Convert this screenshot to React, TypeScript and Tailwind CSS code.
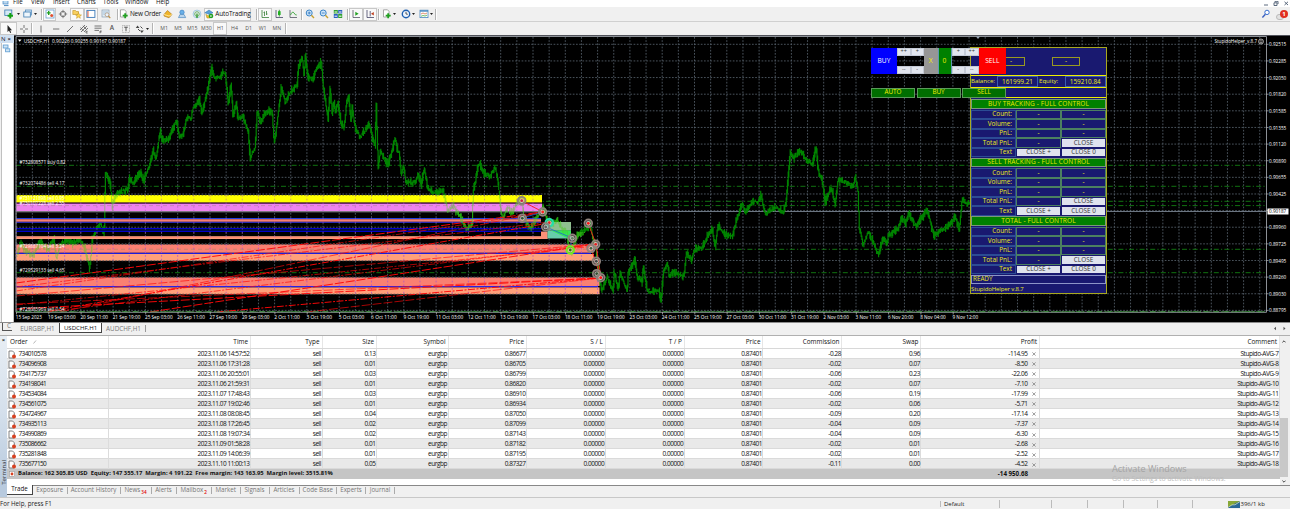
import React from "react";

const GREEN = "#008400";

const PRICE_POINTS = `17,255 20,243 25,250 33,256 40,241 47,250 54,239 56,258 60,244 66,240 73,243 80,240 85,249 89.5,270 92,240 96.5,228 100,224 104,233 105,182 105.5,172 110,182 112,207 115,196 120,192 128,190 129,177 133,184 140,172 143,181 148,170 153,150 156,160 160,130 162,141 168,139 172.7,129 176.7,120 179,137 182.7,135 187,117 191,120 192,110 199,100 202,113 207,92 211.7,67 214,78 220,77 222,72 225,73 228,103 231,85 233,118 236,103 238,118 243,117 248,132 250,158 255,148 257,110 260,122 265,113 272,110 274,145 278,115 281,87 285,102 292,90 297,85 298,68 302,56 304,78 305,54 308,78 312,80 317,67 320,66 321,60 323,85 325,100 328,120 330,87 332,113 334,102 335,113 338,103 341,125 344,127 347,98 348.5,96 351,123 352,107 355,128 360,137 365,130 369,123 372,137 375,145 376,100 378,168 380,152 388,165 392,150 395,138 397,150 399,152 401,175 403,165 406,183 415,182 418,173 421,185 424,168 427,185 428,190 437,193 443,190 448,212 453,205 460,217 467,230 472,223 473,190 475.5,180 477,168 480,163 483,172 490,177 495,167 498,183 500,203 502,220 507,208 513,212 518,200 522,203 524,220 530,228 537,217 543,207 547,220 552,223 557,220 563,230 567,230 568,247 572,252 577,235 583,232 587,228 590,223 593,240 596,247 598,270 601,288 602,290 607,277 613,291 614,273 618,288 620,273 627,291 628,273 635,259 637,277 642,282 643,265 647,290 653,292 659,290 661,303 663,273 667,263 669,275 674,272 678,275 684,277 686,253 692,260 694,250 702,248 707,237 712,228 715,247 718,225 723,233 732,237 737,218 742,204 745,213 752,202 758,202 761,194 765,215 770,210 777,207 783,213 786,202 788,177 790,152 794,158 799,150 807,160 812,165 816,147 818,170 822,180 825,202 831,187 835,205 838,180 845,182 853,187 855,175 858,193 859,227 863,245 868,232 873,242 878,255 883,238 887,245 888,235 897,230 902,218 906,223 908,213 916,227 922,217 927,210 934,237 940,230 948,227 955,217 959,230 962,199 966,204 970,202`
  .split(/\s+/)
  .map((p) => p.split(",").map(Number));

function buildPricePath() {
  let seed = 7;
  const rnd = () => {
    seed = (seed * 16807) % 2147483647;
    return seed / 2147483647;
  };
  const parts: string[] = [];
  let k = 0;
  let prev = PRICE_POINTS[0][1];
  for (let x = 17; x < 970; x += 0.67) {
    while (k < PRICE_POINTS.length - 2 && PRICE_POINTS[k + 1][0] <= x) k++;
    const [x0, y0] = PRICE_POINTS[k];
    const [x1, y1] = PRICE_POINTS[k + 1];
    const y = y0 + ((y1 - y0) * (x - x0)) / (x1 - x0);
    const r = rnd();
    const spread = 1.2 + r * r * 7;
    const shift = (rnd() - 0.5) * 3;
    const a = Math.min(y, prev) + shift - spread * 0.5;
    const b = Math.max(y, prev) + shift + spread * 0.5;
    parts.push(`M${x.toFixed(1)} ${a.toFixed(1)}V${b.toFixed(1)}`);
    prev = y;
  }
  return parts.join("");
}
const PRICE_PATH = buildPricePath();

const PRICE_LABELS = ["0.92515", "0.92285", "0.92050", "0.91820", "0.91585", "0.91355", "0.91120", "0.90890", "0.90655", "0.90425", "0.90187", "0.89960", "0.89725", "0.89495", "0.89260", "0.89030", "0.88795"];
const TIME_LABELS = ["15 Sep 2023", "19 Sep 03:00", "20 Sep 11:00", "21 Sep 19:00", "25 Sep 03:00", "26 Sep 11:00", "27 Sep 19:00", "29 Sep 03:00", "2 Oct 11:00", "3 Oct 19:00", "5 Oct 03:00", "6 Oct 11:00", "9 Oct 19:00", "11 Oct 03:00", "12 Oct 11:00", "13 Oct 19:00", "17 Oct 03:00", "18 Oct 11:00", "19 Oct 19:00", "23 Oct 03:00", "24 Oct 11:00", "25 Oct 19:00", "27 Oct 03:00", "30 Oct 11:00", "31 Oct 19:00", "2 Nov 03:00", "3 Nov 11:00", "6 Nov 20:00", "8 Nov 04:00", "9 Nov 12:00"];

// [top, bottom, right, colour]
const BANDS: [number, number, number, string][] = [
  [195, 202.6, 542, "#ffff00"],
  [202.6, 203.8, 542, "#5a1060"],
  [203.8, 211.2, 542, "#ee82ee"],
  [211.2, 212.3, 542, "#8a8a90"],
  [218, 219.2, 541, "#2040e0"],
  [219.2, 221.8, 541, "#fa8072"],
  [221.8, 222.9, 541, "#3030c8"],
  [228, 229.2, 541, "#0000c8"],
  [229.2, 231, 541, "#00104a"],
  [231, 232, 541, "#0000c8"],
  [236.2, 239, 541, "#ffa07a"],
  [244.3, 252.8, 593.5, "#fa8072"],
  [252.8, 254, 591, "#1c1cdc"],
  [254, 260.8, 594, "#ffa07a"],
  [277.3, 286, 599.5, "#fa8072"],
  [286, 287.4, 598, "#2a20e8"],
  [287.4, 294.2, 599.5, "#ffa07a"],
];

const RED_LINES: [number, number, number, number][] = [
  [16, 283, 542, 212], [16, 287, 549, 222], [60, 312, 542, 212], [50, 311, 549, 223],
  [16, 296, 595, 244], [47, 312, 595, 244], [150, 312, 595, 244], [16, 305, 595, 246],
  [16, 304, 600, 278], [217, 312, 600, 278], [307, 312, 600, 278], [16, 291, 542, 213], [16, 309, 600, 278],
];

const MARKS: [number, number, string][] = [
  [521.7, 200.7, "#d02040"], [522.3, 218.3, "#305838"], [542.7, 212, "#ff2020"], [549.3, 222.7, "#f02020"],
  [545.7, 227, "#606060"], [572.3, 238.3, "#608060"], [570.3, 250, "#3a7010"], [588.3, 223.3, "#ff1010"],
  [595.7, 244.3, "#e02020"], [591, 248.3, "#406040"], [596.3, 261.3, "#404040"], [596.7, 273.7, "#305030"], [600.7, 277.7, "#ff1010"],
];

const TRADE_LEVELS = [165.3, 186.3, 201.3, 205.6, 249.3, 272.7, 311.6];
const TRADE_LABELS: [string, number, number][] = [
  ["#732808571 buy 0.82", 164.4, 46], ["#732074486 sell 4.17", 185.2, 45], ["#731121898 sell 0.95", 200.4, 45],
  ["#730107228 sell 2.55", 204.6, 45], ["#729887104 sell 3.24", 248.2, 45], ["#729529133 sell 4.65", 272, 45], ["#728085969 sell 0.54", 310.6, 45],
];

function Chart() {
  const vLines = Array.from({ length: 78 }, (_, i) => 16.2 + i * 16.15).filter((x) => x < 1266);
  return (
    <svg className="block" width="1276" height="287" viewBox="14 35 1276 287" fontFamily="'Open Sans','Noto Sans',sans-serif" fontWeight="500">
      <defs>
        <clipPath id="bandArea">
          <path d="M438 195H575V232H600V294H438ZM16 195H542V212H16ZM16 228H94V232H16ZM16 244H94V261H16Z" />
        </clipPath>
      </defs>
      <rect x="14" y="35" width="1276" height="287" fill="#000" />
      <rect x="14" y="35" width="1276" height="1" fill="#50525a" />
      {vLines.map((x) => (
        <path key={x} d={`M${x} 37V312`} stroke="#56616c" strokeWidth="0.85" strokeDasharray="1.7 1.5" />
      ))}
      {PRICE_LABELS.map((_, i) => (
        <path key={i} d={`M16 ${44.3 + i * 16.63}H1266`} stroke="#56616c" strokeWidth="0.85" strokeDasharray="1.7 1.5" />
      ))}
      {TRADE_LEVELS.map((y) => (
        <path key={y} d={`M16 ${y}H1266`} stroke="#127812" strokeWidth="0.95" strokeDasharray="5 2.2 1.2 2.2" />
      ))}
      <path d="M542 211.5H1266" stroke="#778290" strokeWidth="0.9" />
      <path d={PRICE_PATH} stroke={GREEN} strokeWidth="1.2" />
      {BANDS.map(([t, b, r, c]) => (
        <rect key={t} x="16" y={t} width={r - 16} height={b - t} fill={c} />
      ))}
      <path d="M16 237.6H541" stroke="#fa8072" strokeWidth="0.8" />
      <rect x="541" y="231.5" width="6.7" height="7.5" fill="#fa9078" />
      <rect x="547.5" y="222" width="23.5" height="8.5" fill="#8fc08f" />
      <rect x="547.5" y="230.5" width="23.5" height="8" fill="#66cdaa" />
      <path d="M551 230.5H571V238.5H568Z" fill="#35e85a" />
      {vLines.filter((x) => x < 599).map((x) => (
        <g key={x} stroke="#b050c8" strokeWidth="0.8" strokeDasharray="1.7 2">
          {x < 541 && <path d={`M${x} 195V212M${x} 218V223M${x} 228V239`} opacity="0.65" />}
          <path d={`M${x} 244V261M${x} 277V294`} />
        </g>
      ))}
      <path d="M16 205.6H541M16 249.3H591" stroke="#8c8b70" strokeWidth="0.7" strokeDasharray="4 3" opacity="0.6" />
      {[195, 244.3, 260.8, 277.3, 294.2].map((y) => (
        <path key={y} d={`M16 ${y}H${y < 200 ? 541 : 593}`} stroke="#3c4650" strokeWidth="0.8" strokeDasharray="1.7 1.5" />
      ))}
      <path d={PRICE_PATH} stroke="#4ecb22" strokeWidth="0.8" opacity="0.6" clipPath="url(#bandArea)" />
      {RED_LINES.map(([x1, y1, x2, y2], i) => (
        <path key={i} d={`M${x1} ${y1}L${x2} ${y2}`} stroke="#ff0808" strokeWidth="1" strokeDasharray={i % 2 ? "7 1.5 2 1.5" : "9 2"} opacity={i % 3 === 0 ? 0.95 : 0.65} />
      ))}
      <path d="M522 201L543 212M588 223L596 244L601 278M591 248L601 278" stroke="#ff1818" strokeWidth="0.9" fill="none" />
      <path d="M522 218L543 212M546 227L572 238L570 250" stroke="#2060d0" strokeWidth="0.8" fill="none" />
      {MARKS.map(([x, y, c], i) => (
        <g key={i}>
          <circle cx={x} cy={y} r="3.9" fill={i === 3 ? "#30d8b0" : i === 6 ? "#70f020" : "#8c8480"} fillOpacity="0.5" stroke={i === 3 ? "#20e0b0" : i === 6 ? "#70f020" : "#8f827c"} strokeWidth="1.7" />
          <circle cx={x} cy={y} r="2.2" fill="#e0d8d4" opacity="0.8" />
          <circle cx={x} cy={y} r="1.4" fill={c} />
        </g>
      ))}
      <path d="M16 36.5H1266.5V312.3H16Z" fill="none" stroke="#8c9096" strokeWidth="1" />
      <path d="M16 311.8H1266" stroke="#5aa05a" strokeWidth="0.7" strokeDasharray="6 3" />
      <path d="M976 36.5H980L978 39Z" fill="#9aa8b8" />
      {PRICE_LABELS.map((p, i) => (
        <g key={p}>
          <path d={`M1266 ${44.3 + i * 16.63}h2.5`} stroke="#aaa" strokeWidth="0.8" />
          {i === 10 && <rect x="1267.5" y="208.5" width="21" height="6" fill="#fff" />}
          <text x="1269" y={46.4 + i * 16.63 + (i === 10 ? 0.6 : 0)} fontSize="5.6" textLength="17.3" lengthAdjust="spacingAndGlyphs" fill={i === 10 ? "#000" : "#fff"}>{p}</text>
        </g>
      ))}
      {TIME_LABELS.map((t, i) => (
        <g key={t}>
          <path d={`M${16.5 + i * 32.3} 312v2.4`} stroke="#aaa" strokeWidth="0.8" />
          <text x={15.8 + i * 32.3} y="318.9" fontSize="5.6" textLength={i > 7 && t.length < 12 ? 25.6 : i === 0 ? 26 : 27.6} lengthAdjust="spacingAndGlyphs" fill="#fff">{t}</text>
        </g>
      ))}
      {TRADE_LABELS.map(([t, y, w]) => (
        <text key={t} x="19.5" y={y} fontSize="5.6" textLength={w} lengthAdjust="spacingAndGlyphs" fill="#fff">{t}</text>
      ))}
      <path d="M18 39.5H21.5L19.7 41.8Z" fill="#fff" />
      <text x="23.8" y="42.7" fontSize="5.6" textLength="102" lengthAdjust="spacingAndGlyphs" fill="#fff">USDCHF,H1&nbsp; 0.90226 0.90255 0.90167 0.90187</text>
      <text x="1214.5" y="43" fontSize="5.6" textLength="42.5" lengthAdjust="spacingAndGlyphs" fill="#fff">StupidoHelper_v.8.7</text>
      <circle cx="1261" cy="41.5" r="2.5" fill="#333" stroke="#ccc" strokeWidth="0.7" />
      <path d="M1259.7 42.2q1.3 1.2 2.6 0M1260 40.7h.6M1261.5 40.7h.6" stroke="#ddd" strokeWidth="0.5" fill="none" />
    </svg>
  );
}

function Small({ children }: { children: string }) {
  return <div className="flex h-[8px] w-[13.5px] items-center justify-center border-[0.5px] border-[#c4cad6] bg-[#e1e5ee] text-[5.5px] leading-none text-[#333]">{children}</div>;
}

function SmallStack({ a, b }: { a: string[]; b: string[] }) {
  return (
    <div className="flex h-[26px] flex-col justify-between">
      <div className="flex">{a.map((t, i) => <Small key={i}>{t}</Small>)}</div>
      <div className="flex">{b.map((t, i) => <Small key={i}>{t}</Small>)}</div>
    </div>
  );
}

function TradePanel() {
  return (
    <div className="absolute left-[857px] top-[13px] flex w-[135px] flex-col justify-between text-[6.6px] font-medium leading-none">
      <div className="flex h-[26px]">
        <div className="flex w-[26px] items-center justify-center bg-[#0000ff] text-white">BUY</div>
        <SmallStack a={["++", "+"]} b={["--", "-"]} />
        <div className="flex w-[13.5px] items-center justify-center bg-[#969696] text-[#f0f000]">X</div>
        <div className="flex w-[14px] items-center justify-center border-x border-[#5a9ab0] bg-[#008000] text-[#f0f000]">0</div>
        <SmallStack a={["+", "++"]} b={["-", "--"]} />
        <div className="flex flex-1 items-center justify-center bg-[#ff0000] text-white">SELL</div>
      </div>
      <div className="mt-[13.5px] grid h-[10px] grid-cols-3 gap-[1.5px]">
        {["AUTO", "BUY", "SELL"].map((t) => (
          <div key={t} className="flex items-center justify-center border-[0.7px] border-[#5a9a5a] bg-[#006e00] text-[6.3px] text-[#f0f000]">{t}</div>
        ))}
      </div>
    </div>
  );
}

function Tracking({ title }: { title: string }) {
  return (
    <div className="flex h-[58.5px] flex-col">
      <div className="mb-px flex h-[9.5px] items-center justify-center border border-[#7a9a7a] bg-[#008000] text-[6.5px] tracking-[0.02em] text-[#eaea00]">{title}</div>
      {["Count:", "Volume:", "PnL:", "Total PnL:", "Text"].map((label, i) => (
        <div key={label} className="grid h-[9.6px] grid-cols-[45px_45px_45px]">
          <div className="flex items-center justify-end border border-[#2c4c94] pr-[3px]">{label}</div>
          {i < 4 ? (
            <div className="flex items-center justify-center border border-[#4c8060]">-</div>
          ) : (
            <div className="flex items-center justify-center border-[0.5px] border-[#191970] bg-[#dfe3ee] text-[6.4px] text-[#333]">CLOSE +</div>
          )}
          {i < 3 ? (
            <div className="flex items-center justify-center border border-[#4c8060]">-</div>
          ) : (
            <div className="flex items-center justify-center border-[0.5px] border-[#191970] bg-[#dfe3ee] text-[6.4px] text-[#333]">{i === 3 ? "CLOSE" : "CLOSE 0"}</div>
          )}
        </div>
      ))}
    </div>
  );
}

function HelperPanel() {
  return (
    <div className="absolute left-[956px] top-[12px] flex h-[247px] w-[137px] flex-col border border-[#a8a820] bg-[#191970] text-[6.4px] font-medium leading-none text-[#eaea20]">
      <div className="flex h-[26.5px] shrink-0 items-center gap-[27px] pl-[26px]">
        <div className="flex h-[9px] w-[28px] items-center justify-center border border-[#9a9a20]">-</div>
        <div className="flex h-[9px] w-[28px] items-center justify-center border border-[#9a9a20]">-</div>
      </div>
      <div className="flex h-[13.5px] shrink-0 items-stretch border-y border-[#f0f000]">
        <div className="w-[26px] whitespace-nowrap pt-[2px] text-[6.1px]">Balance:</div>
        <div className="flex w-[41px] items-center justify-center border border-[#3c5cb0] pt-px">161999.21</div>
        <div className="w-[26.5px] pl-[1px] pt-[2px] text-[6.1px]">Equity:</div>
        <div className="flex flex-1 items-center justify-center border border-[#3c5cb0] pt-px">159210.84</div>
      </div>
      <div className="mb-px h-[10px] shrink-0 border-b border-[#f0f000]" />
      <Tracking title="BUY TRACKING - FULL CONTROL" />
      <Tracking title="SELL TRACKING - FULL CONTROL" />
      <Tracking title="TOTAL - FULL CONTROL" />
      <div className="mt-[0.5px] flex h-[9px] shrink-0 items-center border border-[#8c94c8] pl-px text-[6.3px]">READY</div>
      <div className="flex flex-1 items-center text-[6px] tracking-[-0.02em]">StupidoHelper v.8.7</div>
    </div>
  );
}

/* ---------- toolbar ---------- */

function Icon({ children }: { children: React.ReactNode }) {
  return (
    <svg className="shrink-0" width="10" height="10" viewBox="0 0 10 10" fill="none">
      {children}
    </svg>
  );
}

const Sep = () => <div className="h-[11px] w-[2px] shrink-0 border-l border-[#b4b4b4] bg-white" />;
const Caret = () => (
  <svg width="3" height="2" viewBox="0 0 3 2" className="shrink-0"><path d="M0 0H3L1.5 2Z" fill="#222" /></svg>
);
const Doc = () => (
  <Icon><path d="M1.5 .8H5.5L7 2.3V8H1.5Z" fill="#fff" stroke="#888" strokeWidth=".7" /><path d="M6.2 4.2v5M3.7 6.7h5" stroke="#22a022" strokeWidth="1.8" /></Icon>
);

// One cell per toolbar item: width reserved and drawing
function Cell({ w, on, children }: { w: number; on?: boolean; children: React.ReactNode }) {
  return (
    <div style={{ width: w }} className={on ? "flex h-[13px] shrink-0 items-center justify-center gap-px border border-[#c8c8c8] bg-[#f9f9f9]" : "flex h-[13px] shrink-0 items-center justify-center gap-px"}>
      {children}
    </div>
  );
}

function MainToolbar() {
  return (
    <div className="flex h-[15px] shrink-0 items-center border-b border-[#d0d0d0] bg-[#f0f0f0] text-[6.4px] leading-none text-[#111]">
      <div className="w-[2px]" />
      <Cell w={19}><Icon><rect x=".8" y="1" width="7" height="5.5" fill="#d4e8f6" stroke="#3a7ab0" strokeWidth=".8" /><path d="M6.3 4v5.4M3.6 6.7H9" stroke="#12a012" strokeWidth="2" /></Icon><div className="w-px" /><Caret /></Cell>
      <Cell w={18}><Icon><rect x="2.5" y="1" width="6" height="5" fill="#d4e8f6" stroke="#5a8fc0" strokeWidth=".8" /><rect x=".8" y="3" width="6.5" height="5" fill="#eef6fc" stroke="#3a7ab0" strokeWidth=".8" /></Icon><Caret /></Cell>
      <div className="w-[2px]" /><Sep />
      <Cell w={13} on><Icon><rect x="1" y="1" width="8" height="8" fill="#fff" stroke="#6aa0d0" strokeWidth=".8" /><path d="M3.7 2v4M1.8 3.9h3.8" stroke="#20a020" strokeWidth="1.4" /><circle cx="6.7" cy="6.5" r="1.5" fill="#e05030" /></Icon></Cell>
      <Cell w={14}><Icon><circle cx="5" cy="5" r="2.7" stroke="#777" strokeWidth="1" /><path d="M5 .8V4M5 6V9.2M.8 5H4M6 5H9.2" stroke="#777" strokeWidth=".9" /></Icon></Cell>
      <Cell w={14} on><Icon><path d="M.8 1.5H3.5L4.3 2.5H6.5V5.5H.8Z" fill="#f8d060" stroke="#c09020" strokeWidth=".6" /><path d="M6.5 3.5L7.4 5.8L9.5 6L7.8 7.2L8.3 9.3L6.5 8.1L4.5 9.3L5.1 7.2L3.6 6L5.7 5.8Z" fill="#ffd850" stroke="#c09020" strokeWidth=".5" /></Icon></Cell>
      <Cell w={14} on><Icon><rect x=".9" y="1.4" width="8" height="7" fill="#fff" stroke="#3a78b8" strokeWidth=".9" /><path d="M2 2v6" stroke="#e05030" strokeWidth=".9" /></Icon></Cell>
      <Cell w={15}><Icon><rect x="1" y="1" width="7" height="7" fill="#e2edf5" stroke="#8aa0b4" strokeWidth=".7" /><path d="M2 3h5M2 5h3" stroke="#8ab0d0" strokeWidth=".7" /><circle cx="6" cy="5.7" r="1.9" fill="#e8f4ff" stroke="#b09070" strokeWidth=".7" /><path d="M7.4 7.1L9.3 9" stroke="#c09040" strokeWidth="1.1" /></Icon></Cell>
      <div className="w-[4px]" /><Sep />
      <Cell w={42}><Doc /><span className="whitespace-nowrap text-[6.4px] tracking-[-0.03em]">New Order</span></Cell>
      <Cell w={14}><Icon><path d="M1 5.5L4.5 1.5L9 5.5L6 8.8L1 7Z" fill="#f0b428" stroke="#a87010" strokeWidth=".6" /><path d="M1 5.5L6 7L9 5.5" stroke="#fff0b0" strokeWidth=".8" /></Icon></Cell>
      <Cell w={14}><Icon><circle cx="5" cy="3.3" r="2.2" fill="#6ab0e8" stroke="#3a80c0" strokeWidth=".6" /><path d="M1.5 8.6L3 5.4H7L8.7 8.6Z" fill="#b8d4ec" stroke="#4a88c0" strokeWidth=".7" /></Icon></Cell>
      <Cell w={15}><Icon><circle cx="5" cy="5" r="3.9" stroke="#9ac4e0" strokeWidth=".9" /><circle cx="5" cy="5" r="2.3" stroke="#58a858" strokeWidth=".9" /><path d="M5 4.5V9" stroke="#2a9a2a" strokeWidth="1.3" /></Icon></Cell>
      <Cell w={47} on><Icon><path d="M.8 3.8L5 1L9 3.8L5 5.3Z" fill="#58a0d8" stroke="#2a6ca8" strokeWidth=".5" /><path d="M1.8 5.2Q5 8.5 8 5.2L6 9H3Z" fill="#f0c030" stroke="#b08a10" strokeWidth=".5" /><circle cx="7" cy="7" r="2.3" fill="#20a020" /><path d="M6.4 5.9L8.2 7L6.4 8.1Z" fill="#fff" /></Icon><span className="tracking-[-0.02em]">AutoTrading</span></Cell>
      <div className="w-[5px]" /><Sep />
      <Cell w={14} on><Icon><path d="M2 1V8.5H9M4.5 2.5V7M3.5 3.5H4.5M6.5 2V6M6.5 5H7.5" stroke="#3a803a" strokeWidth=".8" /></Icon></Cell>
      <Cell w={14}><Icon><path d="M2 1V8.5H9" stroke="#446" strokeWidth=".8" /><path d="M5.3 .8V7.6" stroke="#1a8a1a" strokeWidth=".8" /><rect x="4" y="2.2" width="2.6" height="3.8" fill="#20b020" /></Icon></Cell>
      <Cell w={14}><Icon><path d="M2 1V8.5H9" stroke="#556" strokeWidth=".8" /><path d="M2.5 6Q4.5 1.5 6 4T8.7 6" stroke="#30a030" strokeWidth=".9" /></Icon></Cell>
      <div className="w-px" /><Sep />
      <Cell w={14}><Icon><circle cx="4.2" cy="4" r="3" fill="#cfe6fa" stroke="#3a84c8" strokeWidth="1" /><path d="M2.7 4H5.7M4.2 2.5V5.5" stroke="#2a70b8" strokeWidth=".8" /><path d="M6.4 6.3L9 9" stroke="#c8a030" strokeWidth="1.4" /></Icon></Cell>
      <Cell w={14}><Icon><circle cx="4.2" cy="4" r="3" fill="#cfe6fa" stroke="#3a84c8" strokeWidth="1" /><path d="M2.7 4H5.7" stroke="#2a70b8" strokeWidth=".8" /><path d="M6.4 6.3L9 9" stroke="#c8a030" strokeWidth="1.4" /></Icon></Cell>
      <Cell w={14}><Icon><path d="M.8 1H4.8V4.6H.8ZM5.2 5H9.2V9H5.2Z" fill="#30a030" /><path d="M5.2 1H9.2V4.6H5.2ZM.8 5H4.8V9H.8Z" fill="#2a60c0" /><path d="M1.5 3H4M6 3H8.5M1.5 7.2H4M6 7.2H8.5" stroke="#fff" strokeWidth="1" /></Icon></Cell>
      <div className="w-[2px]" /><Sep />
      <Cell w={14} on><Icon><path d="M2 1V8.5H9" stroke="#556" strokeWidth=".8" /><path d="M4.3 2.8L7.6 4.8L4.3 6.8Z" fill="#20a020" /></Icon></Cell>
      <Cell w={14} on><Icon><path d="M2 1V8.5H9M5.2 2V7.4" stroke="#446" strokeWidth=".8" /><path d="M8.8 3L6 4.7L8.8 6.4Z" fill="#c04020" /></Icon></Cell>
      <div className="w-px" /><Sep />
      <Cell w={18}><Doc /><Caret /></Cell>
      <Cell w={19}><Icon><circle cx="5" cy="5" r="3.7" fill="#eef6ff" stroke="#2060b0" strokeWidth="1.4" /><path d="M5 2.8V5L6.8 5.3" stroke="#333" strokeWidth=".8" /></Icon><Caret /></Cell>
      <Cell w={18}><Icon><rect x="1" y="1.2" width="8" height="7.4" fill="#fff" stroke="#4a88c0" strokeWidth=".8" /><path d="M1 2H9" stroke="#4a88c0" strokeWidth="1.4" /><path d="M2 5L4 4L6 5L8 4" stroke="#d06030" strokeWidth=".7" /><path d="M2 7.3L4 6.5L6 7L8 6.2" stroke="#30a030" strokeWidth=".7" /></Icon><Caret /></Cell>
      <Sep />
      <div className="ml-auto flex items-center gap-[5px] pr-[2px]">
        <Icon><circle cx="6" cy="3.4" r="2.2" fill="#fff" stroke="#3a70d0" strokeWidth="1" /><path d="M4.4 5.2L1.4 8.4" stroke="#3a60c0" strokeWidth="1.4" /></Icon>
        <div className="relative h-[11px] w-[12px]">
          <div className="mt-[5px] h-[6px] w-[8px] rounded-full border border-[#bbb] bg-[#e2e2e2]" />
          <div className="absolute right-0 top-[1px] flex h-[8px] w-[8px] items-center justify-center rounded-full bg-[#e03020] text-[6px] font-bold text-white">1</div>
        </div>
      </div>
    </div>
  );
}

function LineToolbar() {
  const s = "#555";
  return (
    <div className="flex h-[13px] shrink-0 items-center bg-[#f0f0f0] text-[5.2px] font-medium leading-none text-[#555]">
      <Cell w={17} on><Icon><path d="M3.5 1V8L5 6.6L6.2 9L7.2 8.5L6.1 6.2H8Z" fill="#222" /></Icon></Cell>
      <Cell w={14}><Icon><path d="M5 1V4M5 6V9M1 5H4M6 5H9" stroke={s} strokeWidth=".8" /></Icon></Cell>
      <Sep />
      <Cell w={15}><Icon><path d="M5 1.5V8.5" stroke={s} strokeWidth=".8" /></Icon></Cell>
      <Cell w={15}><Icon><path d="M2 5H8.3" stroke={s} strokeWidth=".8" /></Icon></Cell>
      <Cell w={13}><Icon><path d="M2 8L8 2" stroke={s} strokeWidth=".8" /></Icon></Cell>
      <Cell w={15}><Icon><path d="M1 6L6 1M2 8L8 2M1.5 3.5L4.5 7M4 1.8L7 5M5 8L9 4" stroke={s} strokeWidth=".8" /><path d="M8.7 7.3H7V9H8.7" stroke="#333" strokeWidth=".6" /></Icon></Cell>
      <Cell w={14}><Icon><path d="M1.5 2H8.5M1.5 4.2H8.5M1.5 6.4H6" stroke={s} strokeWidth=".8" /><path d="M8.7 7H7V9.3M7 8H8.5" stroke="#333" strokeWidth=".6" /></Icon></Cell>
      <Cell w={14}><span className="text-[6.5px] font-semibold">A</span></Cell>
      <Cell w={14}><Icon><rect x="1.5" y="1.5" width="7" height="7" stroke="#999" strokeWidth=".7" strokeDasharray="1 .6" /><path d="M3.2 3.2H6.8M5 3.2V7.2" stroke="#444" strokeWidth=".9" /></Icon></Cell>
      <Cell w={17}><Icon><path d="M2.5 1.5L4.5 4H.8ZM6.8 9L5 6.5H8.8Z" fill="#444" /><path d="M3 5L5 7M5.5 2.5L7.5 4.5" stroke="#444" strokeWidth="1" /></Icon><Caret /></Cell>
      <div className="w-[2px]" /><Sep /><div className="w-[3px]" />
      {["M1", "M5", "M15", "M30", "H1", "H4", "D1", "W1", "MN"].map((t) => (
        <Cell key={t} w={14.1} on={t === "H1"}>{t}</Cell>
      ))}
      <div className="w-px" /><Sep />
    </div>
  );
}

/* ---------- terminal ---------- */

const COLS = "grid grid-cols-[102px_142px_71.5px_54.5px_71.5px_78.5px_78.8px_79px_78.7px_79px_79px_118.5px_240px]";

const ROWS: string[][] = [
  ["734010578", "2023.11.06 14:57:52", "0.13", "0.86677", "-0.28", "0.96", "-114.95", "7"],
  ["734096908", "2023.11.06 17:31:28", "0.01", "0.86705", "-0.02", "0.07", "-8.50", "8"],
  ["734175737", "2023.11.06 20:55:01", "0.03", "0.86799", "-0.06", "0.23", "-22.06", "9"],
  ["734198041", "2023.11.06 21:59:31", "0.01", "0.86820", "-0.02", "0.07", "-7.10", "10"],
  ["734534084", "2023.11.07 17:48:43", "0.03", "0.86910", "-0.06", "0.19", "-17.99", "11"],
  ["734561075", "2023.11.07 19:02:46", "0.01", "0.86934", "-0.02", "0.06", "-5.71", "12"],
  ["734724967", "2023.11.08 08:08:45", "0.04", "0.87050", "-0.09", "0.20", "-17.14", "13"],
  ["734935113", "2023.11.08 17:26:45", "0.02", "0.87099", "-0.04", "0.09", "-7.37", "14"],
  ["734990869", "2023.11.08 19:07:34", "0.02", "0.87143", "-0.04", "0.09", "-6.30", "15"],
  ["735086662", "2023.11.09 01:58:28", "0.01", "0.87182", "-0.02", "0.01", "-2.68", "16"],
  ["735281848", "2023.11.09 14:06:39", "0.01", "0.87195", "-0.02", "0.01", "-2.52", "17"],
  ["735677150", "2023.11.10 11:00:13", "0.05", "0.87327", "-0.11", "0.00", "-4.52", "18"],
];

const HEADERS = ["Time", "Type", "Size", "Symbol", "Price", "S / L", "T / P", "Price", "Commission", "Swap", "Profit", "Comment"];
const TABS: [string, number, string?][] = [
  ["Exposure", 34.5], ["Account History", 53], ["News", 31, "34"], ["Alerts", 25], ["Mailbox", 35.5, "2"], ["Market", 28.5],
  ["Signals", 29], ["Articles", 30], ["Code Base", 37.5], ["Experts", 29], ["Journal", 29],
];

function Terminal() {
  return (
    <div className="flex h-[150px] shrink-0 border-t border-[#b0b0b0] bg-[#f0f0f0]">
      <div className="flex w-[7px] shrink-0 flex-col items-center justify-between bg-gradient-to-b from-[#e8eef4] via-[#d5e0ec] to-[#b8cade]">
        <span className="pt-px text-[6px] font-bold leading-none text-[#222]">×</span>
        <span className="rotate-180 text-[6px] leading-none text-[#333] [writing-mode:vertical-rl]">Terminal</span>
      </div>
      <div className="flex w-[1273px] shrink-0 flex-col bg-white text-[6.5px] leading-none text-[#111]">
        <div className={`${COLS} h-[12.5px] shrink-0 border-b border-[#d8d8d8] text-[6.4px]`}>
          <div className="flex items-center gap-[5px] border-r border-[#e6e6e6] pl-[3px]">Order <svg width="4" height="4" viewBox="0 0 4 4"><path d="M.5 3.5L3 .5" stroke="#888" strokeWidth=".6" /></svg></div>
          {HEADERS.map((h, i) => (
            <div key={i} className="flex items-center justify-end whitespace-nowrap border-r border-[#e6e6e6] pr-[2px]">{h}</div>
          ))}
        </div>
        {ROWS.map((r, i) => {
          const cells = [r[1], "sell", r[2], "eurgbp", r[3], "0.00000", "0.00000", "0.87401", r[4], r[5], r[6], `Stupido-AVG-${r[7]}`];
          return (
            <div key={r[0]} className={`${COLS} h-[10.07px] shrink-0 border-b border-[#dadada] font-medium tracking-[-0.07em] ${i % 2 ? "bg-[#e9e9e9]" : "bg-white"}`}>
              <div className="flex items-center gap-[2px] border-r border-[#dcdcdc] pl-px pt-px tracking-[-0.1em]">
                <svg width="8.5" height="9" viewBox="0 0 8.5 9" className="shrink-0"><path d="M1 1H4.6L6.3 2.8V8H1Z" fill="#fff" stroke="#666" strokeWidth=".8" /><circle cx="6" cy="6.6" r="2" fill="#d84020" /></svg>
                {r[0]}
              </div>
              {cells.map((c, j) => (
                <div key={j} className={`flex items-center justify-end whitespace-nowrap border-r border-[#dcdcdc] pt-px ${j === 10 ? "gap-[5px] pr-[2.5px]" : "pr-[0.5px]"}`}>
                  {c}
                  {j === 10 && <svg width="4" height="4" viewBox="0 0 4 4"><path d="M.4.4L3.6 3.6M3.6.4L.4 3.6" stroke="#777" strokeWidth=".7" /></svg>}
                </div>
              ))}
            </div>
          );
        })}
        <div className="flex h-[10px] shrink-0 items-center bg-[#c5c5c5] pl-[2px] text-[6.2px] font-bold text-[#111]">
          <svg width="6" height="6" viewBox="0 0 6 6" className="mr-[3px]"><rect x=".4" y=".4" width="5.2" height="5.2" fill="#fff" stroke="#999" strokeWidth=".6" /><circle cx="3" cy="3" r="1.4" fill="#d84020" /></svg>
          <span className="whitespace-pre text-[5.85px]">Balance: 162 305.85 USD  Equity: 147 355.17  Margin: 4 191.22  Free margin: 143 163.95  Margin level: 3515.81%</span>
          <span className="ml-auto mr-[252px]">-14 950.68</span>
        </div>
      </div>
      <div className="flex w-[8px] flex-col items-center justify-between bg-[#f0f0f0] py-[2px]">
        <svg className="mt-[2px]" width="4" height="3" viewBox="0 0 4 3"><path d="M.4 2.4L2 .8L3.6 2.4" stroke="#333" strokeWidth=".9" fill="none" /></svg>
        <div className="mt-auto h-[59px] w-full bg-[#c8c8c8]" />
        <svg className="mt-[3px]" width="4" height="3" viewBox="0 0 4 3"><path d="M.4.6L2 2.2L3.6.6" stroke="#333" strokeWidth=".9" fill="none" /></svg>
      </div>
    </div>
  );
}

export default function App() {
  return (
    <div className="relative flex h-[509px] w-[1290px] flex-col overflow-hidden bg-[#f0f0f0] font-['Open_Sans','Noto_Sans',sans-serif]">
      <div className="flex h-[7px] shrink-0 items-center bg-white text-[6.2px] leading-none text-[#111]">
        <svg width="10" height="6" viewBox="0 0 10 6"><rect x="3" y="-2" width="5" height="5" fill="#b8d8f0" stroke="#4a88c0" strokeWidth=".7" /><path d="M4 4.6H8.5" stroke="#4a88c0" /></svg>
        <div className="-mt-[3px] flex pl-[3px]">
          <span className="w-[18px]">File</span><span className="w-[22px]">View</span><span className="w-[24px]">Insert</span><span className="w-[26px]">Charts</span><span className="w-[22px]">Tools</span><span className="w-[31px]">Window</span><span>Help</span>
        </div>
        <svg className="ml-auto" width="27" height="6" viewBox="0 0 27 6"><path d="M1 4H5M11 1.8H14V4.5H11ZM12 1V.3H15V3M21.5 .8L25 4M25 .8L21.5 4" stroke="#4a5a70" strokeWidth=".9" fill="none" /></svg>
      </div>
      <MainToolbar />
      <LineToolbar />
      <div className="flex h-[287px] shrink-0">
        <div className="flex w-[14px] shrink-0 flex-col bg-[#f0f0f0]">
          <div className="flex h-[8px] items-center gap-[2px] bg-[#cfdff0] pl-[1px] text-[6px] leading-none text-[#223]">N<span className="font-bold">×</span></div>
          <div className="ml-px flex-1 border-x border-[#c0c0c0] bg-white pt-px">
            <svg width="9" height="9" viewBox="0 0 9 9"><rect x="1.2" y="1" width="4.8" height="3" fill="#d0e6f6" stroke="#5a9ad0" strokeWidth=".8" /><rect x="3.6" y="4.8" width="4.2" height="3" fill="#d0e6f6" stroke="#5a9ad0" strokeWidth=".8" /></svg>
          </div>
        </div>
        <div className="relative h-[287px] w-[1276px]">
          <Chart />
          <HelperPanel />
          <TradePanel />
        </div>
      </div>
      <div className="flex h-[13px] shrink-0 items-start border-t border-[#8c8c8c] text-[6.3px] leading-none text-[#777]">
        <div className="ml-[2px] flex h-[8px] w-[10px] shrink-0 items-center justify-end border-b border-l border-[#555] bg-[#f0f0f0] pr-px">C</div>
        <span className="w-[47px] pl-[4px] pt-[3px] text-center">EURGBP,H1</span>
        <div className="flex h-[10px] w-[43px] items-center justify-center border border-t-0 border-[#444] bg-white pt-px text-[6.1px] text-[#111]">USDCHF,H1</div>
        <span className="w-[43px] pt-[3px] text-center">AUDCHF,H1</span>
        <span className="mt-[2px] h-[7px] w-px bg-[#999]" />
        <svg className="ml-auto mr-[3px] mt-[3px]" width="14" height="5" viewBox="0 0 14 5"><path d="M3 .8V4.2L1 2.5ZM10.5 .8V4.2L12.5 2.5Z" fill="#555" /></svg>
      </div>
      <Terminal />
      <div className="flex h-[13px] shrink-0 items-start border-b border-[#c8c8c8] text-[6.2px] leading-none text-[#777]">
        <div className="w-[7px] self-stretch bg-[#b8cade]" />
        <div className="flex flex-1 items-start self-stretch">
          <div className="flex h-[10px] w-[26px] items-center justify-center border-b border-r border-[#444] bg-white text-[#111]">Trade</div>
          <div className="flex flex-1 items-start border-t border-[#888]">
            {TABS.map(([t, w, n]) => (
              <div key={t} style={{ width: w }} className="mt-[1px] flex h-[7px] items-center justify-center whitespace-nowrap border-r border-[#aaa]">
                {t}
                {n && <span className="ml-[1px] mt-[4px] text-[4.6px] font-semibold text-[#e00000]">{n}</span>}
              </div>
            ))}
          </div>
        </div>
      </div>
      <div className="flex flex-1 items-center pt-px text-[6.2px] leading-none text-[#222]">
        <span className="w-[940px]">For Help, press F1</span>
        <span className="w-[59px] border-l border-[#bbb] pl-[3px] text-[6px]">Default</span>
        <span className="h-[8px] w-[51.5px] border-l border-[#bbb]" />
        <span className="h-[8px] w-[36px] border-l border-[#bbb]" />
        <span className="h-[8px] w-[36px] border-l border-[#bbb]" />
        <span className="h-[8px] w-[34px] border-l border-[#bbb]" />
        <span className="h-[8px] w-[35px] border-l border-[#bbb]" />
        <span className="h-[8px] w-[35px] border-l border-[#bbb]" />
        <svg width="13" height="7" viewBox="0 0 13 7"><path d="M1 0H13V7H1Z" fill="#2a6898" /><path d="M1 0H13L1 6Z" fill="#88a838" /><path d="M1 6.5L5 3.8H8L13 .5" stroke="#e8f0c0" strokeWidth=".7" fill="none" /></svg>
        <span className="pl-px text-[6px]">396/1 kb</span>
      </div>
      <div className="absolute left-[1112px] top-[463.5px] leading-none text-[#a4a4a4]">
        <div className="text-[9.1px]">Activate Windows</div>
        <div className="mt-[3px] text-[6.95px] text-[#bcbcbc]">Go to Settings to activate Windows.</div>
      </div>
    </div>
  );
}
